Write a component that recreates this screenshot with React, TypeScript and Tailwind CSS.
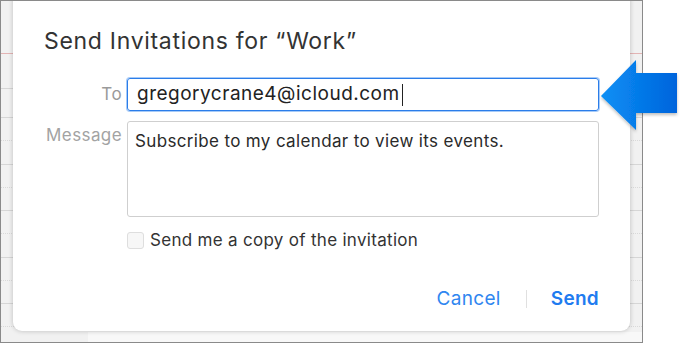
import React from "react";

const rows: { y: number; kind: "solid" | "dotted" | "red" }[] = [
  { y: 53, kind: "red" },
  { y: 88, kind: "solid" },
  { y: 117, kind: "solid" },
  { y: 140, kind: "dotted" },
  { y: 164, kind: "solid" },
  { y: 187, kind: "dotted" },
  { y: 210, kind: "solid" },
  { y: 233, kind: "dotted" },
  { y: 257, kind: "solid" },
  { y: 280, kind: "dotted" },
  { y: 303, kind: "solid" },
  { y: 326, kind: "dotted" },
];

export default function App() {
  return (
    <div
      className="relative w-[688px] h-[344px] bg-white overflow-hidden"
      style={{ fontFamily: "Inter, 'Noto Sans', sans-serif" }}
    >
      {/* frame with calendar behind */}
      <div className="relative w-[643px] h-[343px] border border-[#8a8a8a] bg-[#f1f1f1] overflow-hidden">
        {rows.map((r) => (
          <div
            key={r.y}
            className={
              r.kind === "red"
                ? "absolute left-0 right-0 border-t border-[#e3b4b4]"
                : r.kind === "solid"
                ? "absolute left-0 right-0 border-t border-[#d6d6d6]"
                : "absolute left-0 right-0 border-t border-dotted border-[#d9d9d9]"
            }
            style={{ top: r.y - 1 }}
          />
        ))}
        <div className="absolute left-[87px] right-0 top-[331px] bottom-0 bg-[#f8f8f8]" />

        {/* dialog */}
        <div className="absolute left-[12px] top-[-10px] w-[617px] h-[340px] bg-white rounded-[9px] shadow-[0_0_5px_rgba(0,0,0,0.22)] flex flex-col">
          <div className="pt-[36px] pl-[31px] text-[23px] leading-[28px] text-[#333] tracking-[0.7px]">
            Send Invitations for “Work”
          </div>

          <div className="mt-[23px] flex items-center">
            <div className="w-[114px] pr-[5px] text-right text-[17px] tracking-[0.4px] text-[#9a9a9a]">To</div>
            <div className="w-[472px] h-[33px] rounded-[3px] border border-[#2b7de9] shadow-[0_0_0_1px_rgba(60,140,240,0.45)] flex items-center pl-[9px] text-[19px] tracking-[0.5px] text-[#222]">
              gregorycrane4@icloud.com
              <span className="ml-[2px] inline-block w-[1.5px] h-[22px] bg-[#222]" />
            </div>
          </div>

          <div className="mt-[10px] flex items-start">
            <div className="w-[114px] pr-[5px] pt-[2px] text-right text-[17px] leading-[24px] tracking-[0.4px] text-[#a3a3a3]">Message</div>
            <div className="w-[472px] h-[96px] rounded-[3px] border border-[#cfcfcf] pl-[7px] pt-[7px] text-[17px] leading-[24px] tracking-[0.35px] text-[#2a2a2a]">
              Subscribe to my calendar to view its events.
            </div>
          </div>

          <div className="mt-[15px] ml-[114px] flex items-center h-[17px]">
            <div className="w-[17px] h-[17px] rounded-[3px] border border-[#dedede] bg-[#f7f7f7]" />
            <div className="ml-[6px] text-[17px] leading-[17px] tracking-[0.3px] text-[#333]">Send me a copy of the invitation</div>
          </div>

          <div className="mt-[38px] flex items-center justify-end pr-[31px] text-[19px] leading-[24px] tracking-[0.3px]">
            <span className="text-[#2f86f0]">Cancel</span>
            <span className="ml-[25px] mr-[24px] w-px h-[18px] bg-[#e0e0e0]" />
            <span className="text-[#1f7cf0] font-semibold">Send</span>
          </div>
        </div>
      </div>

      {/* arrow */}
      <svg
        className="absolute left-[596px] top-[58px]"
        width="88"
        height="78"
        viewBox="0 0 88 78"
      >
        <defs>
          <linearGradient id="ag" x1="0" y1="0" x2="1" y2="0">
            <stop offset="0" stopColor="#0b90f5" />
            <stop offset="1" stopColor="#0064dc" />
          </linearGradient>
          <filter id="sh" x="-20%" y="-20%" width="140%" height="150%">
            <feDropShadow dx="0" dy="2" stdDeviation="1.5" floodColor="#000" floodOpacity="0.25" />
          </filter>
        </defs>
        <path
          d="M5 38 L40 2 L40 15 L81 15 L81 55 L40 55 L40 72 Z"
          fill="url(#ag)"
          filter="url(#sh)"
        />
      </svg>
    </div>
  );
}
